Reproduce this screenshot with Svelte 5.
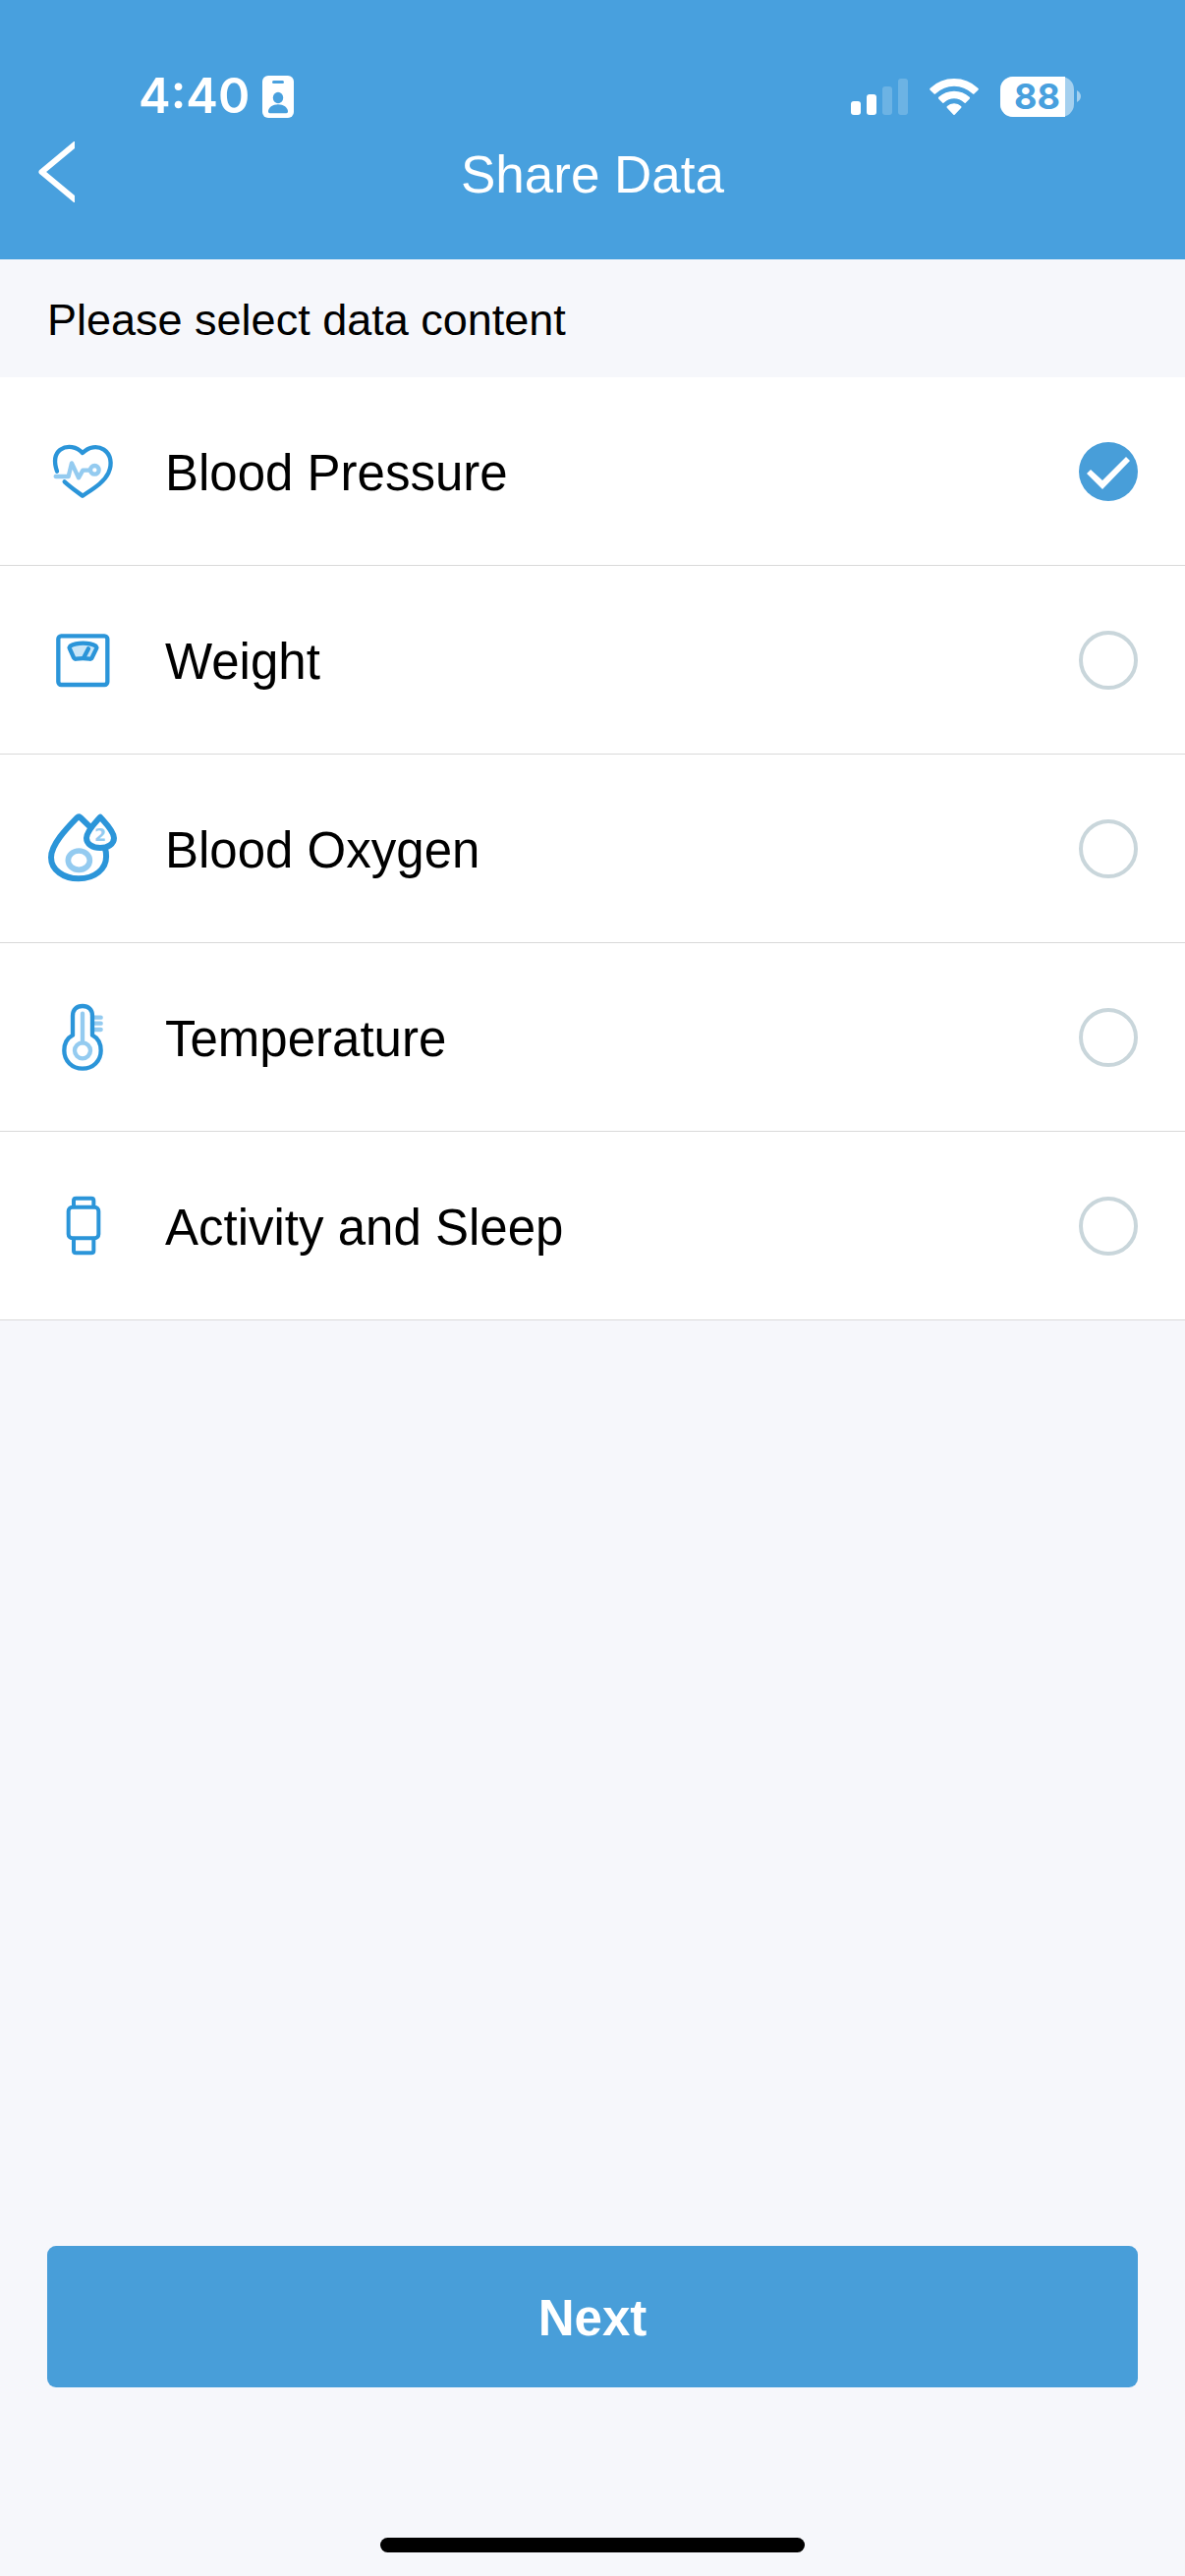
<script>
    let items = $state([
        { id: "bp", label: "Blood Pressure", checked: true },
        { id: "weight", label: "Weight", checked: false },
        { id: "oxygen", label: "Blood Oxygen", checked: false },
        { id: "temp", label: "Temperature", checked: false },
        { id: "activity", label: "Activity and Sleep", checked: false },
    ]);

    const battery = 88;
</script>

<div class="page">
    <header class="header">
        <div class="status-bar">
            <div class="status-left">
                <span class="time">4:40</span>
                <svg class="badge" viewBox="0 0 32 43" aria-hidden="true">
                    <rect width="32" height="43" rx="6" fill="#fff" />
                    <rect x="10" y="5" width="12" height="3" rx="1.5" fill="#48a0de" />
                    <ellipse cx="16" cy="22.5" rx="5.2" ry="5.7" fill="#48a0de" />
                    <path
                        d="M6 36.5C6 32.5 10.5 29.3 16 29.3S26 32.5 26 36.5Q26 38.3 24.500 38.300H7.500Q6 38.300 6 36.500Z"
                        fill="#48a0de"
                    />
                </svg>
            </div>
            <div class="status-right">
                <svg class="signal" viewBox="0 0 58 37" aria-hidden="true">
                    <rect x="0" y="23" width="10" height="14" rx="3" />
                    <rect x="16" y="16" width="10" height="21" rx="3" />
                    <rect x="32" y="8" width="10" height="29" rx="3" opacity="0.2" />
                    <rect x="48" y="0" width="10" height="37" rx="3" opacity="0.2" />
                </svg>
                <svg class="wifi" viewBox="0 0 150 111" aria-hidden="true">
                    <path d="M2 29Q-1 32 2 35L13 46Q16 49 19 46Q43 23 75 23T131 46Q134 49 137 46L148 35Q151 32 148 29Q117 0 75 0T2 29Z" />
                    <path d="M28 56Q25 59 28 62L40 74Q42 76 45 73Q58 61 75 61T105 73Q108 76 110 74L122 62Q125 59 122 56Q102 38 75 38T28 56Z" />
                    <path d="M54 84Q51 87 54 90L73 110Q75 112 77 110L96 90Q99 87 96 84Q88 76 75 76T54 84Z" />
                </svg>
                <div class="battery">
                    <div class="battery-body">
                        <div class="battery-fill" style="width: {battery}%"></div>
                        <span class="battery-text">{battery}</span>
                    </div>
                    <svg class="battery-tip" viewBox="0 0 4 12" aria-hidden="true">
                        <path d="M0 0C2.500 1.500 4 3.500 4 6S2.500 10.500 0 12Z" />
                    </svg>
                </div>
            </div>
        </div>

        <nav class="nav">
            <button class="back" type="button" aria-label="Back">
                <svg viewBox="0 0 37 62" aria-hidden="true">
                    <path d="M39 1.500L3.500 31L39 60.500" />
                </svg>
            </button>
            <h1>Share Data</h1>
        </nav>
    </header>

    <main class="main">
        <h2 class="prompt">Please select data content</h2>

        <ul class="list">
            {#each items as item (item.id)}
                <li>
                    <label class="row" for={item.id}>
                        {#if item.id === "bp"}
                            <svg class="icon" viewBox="54 42 216 216" aria-hidden="true">
                                <path
                                    class="dark"
                                    d="M84 149C74 119 77 96 94 83C116 68 145 74 162 93C181 74 207 70 227 83C248 97 254 126 241 154C227 184 193 203 162 224C143 210 124 197 107 181"
                                />
                                <path class="light" d="M80 165H119L129 124L150 169L163 146H182" />
                                <circle class="light" cx="199" cy="145" r="13" />
                            </svg>
                        {:else if item.id === "weight"}
                            <svg class="icon" viewBox="54 63 216 216" aria-hidden="true">
                                <rect class="dark" x="88" y="97" width="150" height="149" rx="9" />
                                <path
                                    class="dark dial"
                                    d="M124 128C145 116 182 116 203 128Q206 131 204 136L191 163Q189 168 184 167Q163 164 142 167Q138 168 135 163L123 136Q121 131 124 128Z"
                                />
                                <path class="dark" d="M180 136L166 163" />
                            </svg>
                        {:else if item.id === "oxygen"}
                            <svg class="icon" viewBox="54 54 216 216" aria-hidden="true">
                                <path
                                    class="dark thick"
                                    d="M184 94L155 66Q150 62 145 67C112 101 66 149 66 188C66 226 104 253 150 253C198 253 237 224 234 181C234 174 233 168 231 162"
                                />
                                <path
                                    class="dark thick"
                                    d="M216 65C203 80 174 108 174 129C174 147 192 159 216 159S258 147 258 129C258 108 229 80 216 65Z"
                                />
                                <ellipse class="light ring" cx="151" cy="197" rx="33" ry="29" />
                                <text x="216" y="139" text-anchor="middle">2</text>
                            </svg>
                        {:else if item.id === "temp"}
                            <svg class="icon" viewBox="54 60 216 216" aria-hidden="true">
                                <path class="light" d="M192 107H218M192 125H218M192 144H218" />
                                <path
                                    class="dark"
                                    d="M132 161V102C132 83 144 72 162 72S192 83 192 102V161C209 170 218 188 218 208C218 240 194 263 162 263S106 240 106 208C106 188 115 170 132 161Z"
                                />
                                <path class="light" d="M162 95V184" />
                                <circle class="light" cx="162" cy="208" r="24" />
                            </svg>
                        {:else}
                            <svg class="icon" viewBox="54 66 216 216" aria-hidden="true">
                                <rect class="dark slim" x="119" y="116" width="92" height="95" rx="12" />
                                <path class="dark slim" d="M135 115V96Q135 89 142 89H189Q196 89 196 96V115" />
                                <path class="dark slim" d="M135 212V249Q135 256 142 256H189Q196 256 196 249V212" />
                            </svg>
                        {/if}
                        <span class="label">{item.label}</span>
                        <input type="checkbox" id={item.id} bind:checked={item.checked} />
                    </label>
                </li>
            {/each}
        </ul>
    </main>

    <footer class="footer">
        <button class="next" type="button">Next</button>
        <div class="home-indicator"></div>
    </footer>
</div>

<style>
    :global(body) {
        margin: 0;
        background: #f6f7fb;
    }

    .page {
        min-height: 100vh;
        display: flex;
        flex-direction: column;
        background: #f6f7fb;
        color: #000;
        font-family: "Liberation Sans", Arial, Helvetica, sans-serif;
    }

    .header {
        background: #48a0de;
        color: #fff;
        padding: 64px 0 46px;
    }

    .status-bar {
        display: flex;
        align-items: center;
        justify-content: space-between;
        height: 68px;
        padding: 0 106px 0 141px;
    }

    .status-left,
    .status-right {
        display: flex;
        align-items: center;
    }
    .status-left {
        gap: 13px;
    }
    .status-right {
        gap: 22px;
    }

    .time {
        font-family: Inter, sans-serif;
        font-size: 49px;
        font-weight: 600;
        line-height: 60px;
    }
    .badge {
        width: 32px;
        height: 43px;
    }

    .signal {
        width: 58px;
        height: 37px;
        fill: #fff;
    }
    .wifi {
        width: 50px;
        height: 37px;
        fill: #fff;
    }

    .battery {
        display: flex;
        align-items: center;
        gap: 3px;
    }
    .battery-body {
        position: relative;
        width: 75px;
        height: 41px;
        border-radius: 13px;
        background: rgba(255, 255, 255, 0.5);
    }
    .battery-fill {
        height: 100%;
        border-radius: 13px 0 0 13px;
        background: #fff;
    }
    .battery-text {
        position: absolute;
        inset: 0;
        color: #48a0de;
        font-family: Inter, sans-serif;
        font-size: 36px;
        font-weight: 700;
        line-height: 41px;
        text-align: center;
    }
    .battery-tip {
        width: 4px;
        height: 12px;
        fill: rgba(255, 255, 255, 0.5);
    }

    .nav {
        display: grid;
        grid-template-columns: 120px 1fr 120px;
        align-items: center;
        height: 86px;
    }
    .back {
        display: flex;
        align-items: center;
        height: 86px;
        padding: 0 0 0 39px;
        border: 0;
        background: none;
        cursor: pointer;
    }
    .back svg {
        width: 37px;
        height: 62px;
        fill: none;
        stroke: #fff;
        stroke-width: 6;
        stroke-linejoin: round;
    }
    h1 {
        margin: 0;
        padding-top: 6px;
        font-size: 53px;
        font-weight: 400;
        line-height: 62px;
        text-align: center;
    }

    .main {
        flex: 1;
    }

    .prompt {
        margin: 0;
        padding: 3px 48px 0;
        font-size: 45px;
        font-weight: 400;
        line-height: 117px;
    }

    .list {
        margin: 0;
        padding: 0;
        list-style: none;
        background: #fff;
    }
    .row {
        display: flex;
        align-items: center;
        gap: 48px;
        padding: 60px 48px 59px;
        border-bottom: 1px solid #d9d9d9;
        cursor: pointer;
    }
    .label {
        flex: 1;
        padding-top: 3px;
        font-size: 51px;
        line-height: 60px;
    }

    .icon {
        width: 72px;
        height: 72px;
        flex-shrink: 0;
        fill: none;
        stroke-width: 13;
        stroke-linecap: round;
        stroke-linejoin: round;
    }
    .dark {
        stroke: #2b95d9;
    }
    .light {
        stroke: #94cbf0;
    }
    .dial {
        fill: #c9e6f8;
    }
    .thick {
        stroke-width: 18;
    }
    .ring {
        stroke-width: 17;
    }
    .slim {
        stroke-width: 12;
    }
    .icon text {
        fill: #94cbf0;
        font-family: "DejaVu Sans", sans-serif;
        font-size: 52px;
        font-weight: 700;
    }

    input {
        appearance: none;
        flex-shrink: 0;
        width: 60px;
        height: 60px;
        margin: 0;
        border: 4px solid #c9d6db;
        border-radius: 50%;
        background: #fff;
        cursor: pointer;
    }
    input:checked {
        border: 0;
        background: #489ed9;
    }
    input:checked::before {
        content: "";
        display: block;
        width: 60px;
        height: 60px;
        background: #fff;
        clip-path: polygon(
            8px 32px,
            12px 28px,
            24px 39px,
            48px 15px,
            52px 19px,
            24px 48px
        );
    }

    .footer {
        display: flex;
        flex-direction: column;
        align-items: center;
        gap: 153px;
        padding: 0 48px 24px;
    }
    .next {
        width: 100%;
        height: 144px;
        padding: 3px 0 0;
        border: 0;
        border-radius: 9px;
        background: #489ed9;
        color: #fff;
        font-family: inherit;
        font-size: 51px;
        font-weight: 700;
        cursor: pointer;
    }
    .home-indicator {
        width: 432px;
        height: 15px;
        border-radius: 8px;
        background: #000;
    }
</style>
